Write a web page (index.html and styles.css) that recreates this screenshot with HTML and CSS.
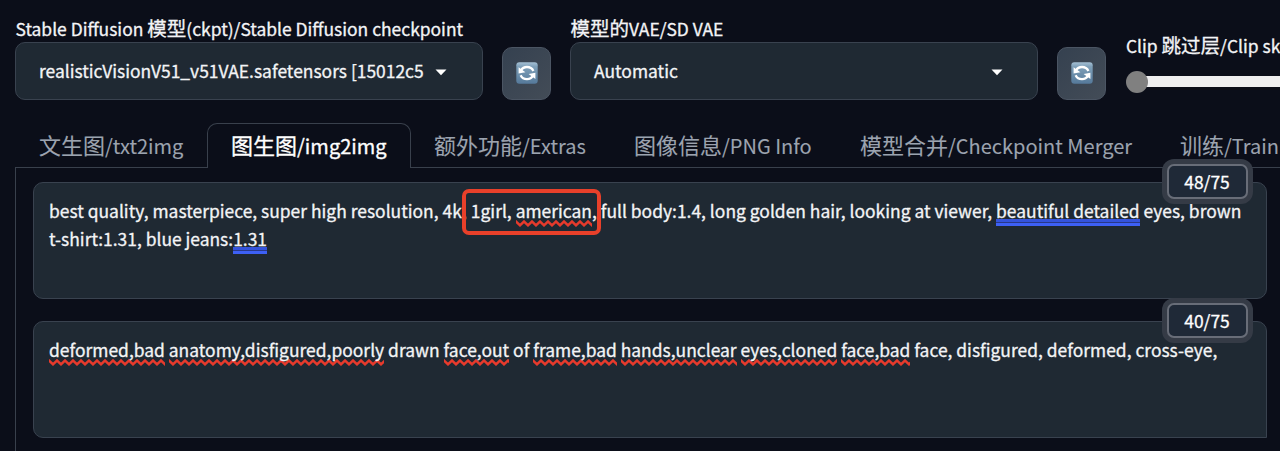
FILE: index.html
```html
<!DOCTYPE html>
<html lang="zh-CN">
<head>
<meta charset="utf-8">
<title>Stable Diffusion</title>
<link rel="stylesheet" href="styles.css">
</head>
<body>
<svg class="defs" width="0" height="0" aria-hidden="true">
  <defs>
    <linearGradient id="tile" x1="0" y1="0" x2="0" y2="1">
      <stop offset="0" stop-color="#a5c0d4"/><stop offset=".2" stop-color="#7fa0b9"/><stop offset="1" stop-color="#55799a"/>
    </linearGradient>
    <symbol id="refresh" viewBox="0 0 22 22">
      <rect x=".3" y=".3" width="21.4" height="21.4" rx="3" fill="url(#tile)"/>
      <path d="M5 8.500C6.200 6.200 8.300 5 11 5c2.900 0 5.200 1.400 6.400 3.900M17 13.500C15.800 15.900 13.700 17.200 11 17.200c-2.900 0-5.200-1.400-6.400-3.900" fill="none" stroke="#fff" stroke-width="2.300"/>
      <path d="M2.600 5.200v6.200l6.800-1.200zM19.400 17v-6.200l-6.800 1.200z" fill="#fff"/>
    </symbol>
  </defs>
</svg>
<div class="app">
  <header class="quick">
    <div class="field">
      <div class="label ckpt-label">Stable Diffusion <span class="cjk">模型</span>(ckpt)/Stable Diffusion checkpoint</div>
      <div class="select"><span class="value ckpt-value">realisticVisionV51_v51VAE.safetensors [15012c5</span><svg class="caret" viewBox="0 0 12 7"><path d="M.5.5h11L6 6.300z"/></svg></div>
    </div>
    <button class="tool"><svg><use href="#refresh"/></svg></button>
    <div class="field">
      <div class="label vae-label"><span class="cjk">模型的</span>VAE/SD VAE</div>
      <div class="select"><span class="value">Automatic</span><svg class="caret caret-far" viewBox="0 0 12 7"><path d="M.5.5h11L6 6.300z"/></svg></div>
    </div>
    <button class="tool"><svg><use href="#refresh"/></svg></button>
    <div class="slider">
      <div class="label">Clip <span class="cjk">跳过层</span>/Clip sk</div>
      <div class="track"><div class="thumb"></div></div>
    </div>
  </header>
  <nav class="tabs">
    <div class="tab t1"><span class="cjk">文生图</span>/txt2img</div>
    <div class="tab t2 active"><span class="cjk">图生图</span>/img2img</div>
    <div class="tab t3"><span class="cjk">额外功能</span>/Extras</div>
    <div class="tab t4"><span class="cjk">图像信息</span>/PNG Info</div>
    <div class="tab t5"><span class="cjk">模型合并</span>/Checkpoint Merger</div>
    <div class="tab t6"><span class="cjk">训练</span>/Train</div>
  </nav>
  <main class="panel">
    <section class="prompt">
      <p class="line l1">best quality, masterpiece, super high resolution, 4k, 1girl, <span class="spell">american</span>, full body:1.4, long golden hair, looking at viewer, <span class="grammar">beautiful detailed</span> eyes, brown</p>
      <p class="line l2">t-shirt:1.31, blue jeans:<span class="grammar">1.31</span></p>
      <div class="mark"></div>
      <div class="counter">48/75</div>
    </section>
    <section class="prompt negative">
      <p class="line l3"><span class="spell">deformed,bad</span> <span class="spell">anatomy,disfigured,poorly</span> drawn <span class="spell">face,out</span> of <span class="spell">frame,bad</span> <span class="spell">hands,unclear</span> <span class="spell">eyes,cloned</span> <span class="spell">face,bad</span> face, disfigured, deformed, cross-eye,</p>
      <div class="counter">40/75</div>
    </section>
  </main>
</div>
</body>
</html>
```
FILE: styles.css
```css
* { box-sizing: border-box; }
body {
  margin: 0;
  background: #0b0e19;
  color: #f3f4f6;
  font-family: "Noto Sans CJK SC", "Noto Sans", sans-serif;
  font-size: 17.430px;
  -webkit-text-stroke: .3px;
}
.defs { position: absolute; }
.app { width: 1280px; height: 451px; overflow: hidden; }
.cjk { font-size: 1.12em; }

.quick { display: flex; align-items: flex-end; height: 100px; padding-left: 15px; }
.field { flex: none; width: 468px; }
.label { height: 26px; line-height: 26px; white-space: nowrap; }
.field .label { height: 27px; padding-left: .5px; }
.select {
  display: flex; align-items: center;
  height: 58px; padding: 0 0 1px 23px;
  border: 1px solid #39424f; border-radius: 10px;
  background: #1f2933;
  white-space: nowrap;
}
.value { flex: none; width: 385px; }
.caret { flex: none; width: 12px; height: 7px; margin: 4px 0 0 11px; fill: #fff; }
.caret-far { margin-left: 12px; }
.tool {
  flex: none; display: flex; align-items: center; justify-content: center;
  width: 49px; height: 53px; margin: 0 19px; padding: 0 0 1px;
  border: 1px solid #4b5563; border-radius: 10px;
  background: linear-gradient(135deg, #354150, #434c57);
}
.tool svg { width: 22px; height: 22px; }
.slider { flex: none; width: 300px; height: 68px; padding-left: 1px; }
.track { height: 11px; margin: 18px 0 0 11px; background: #efeff0; }
.thumb { position: relative; left: -11px; top: -5.500px; width: 22px; height: 22px; border-radius: 50%; background: #808080; }

.tabs {
  display: flex; height: 45px; margin: 23px 0 0 15px;
  font-size: 20px; color: #9ca3af; white-space: nowrap;
  -webkit-text-stroke: .1px;
}
.tabs .cjk { font-size: 22px; }
.tab {
  flex: none; height: 45px; padding-left: 24px; line-height: 42px;
  border-bottom: 1px solid #39404c;
}
.t1 { width: 192px; }
.tab.t2 { width: 204px; padding-left: 23px; line-height: 40px; -webkit-text-stroke: .3px; }
.t3 { width: 200px; padding-left: 23px; }
.t4 { width: 226px; padding-left: 23px; }
.t5 { width: 320px; padding-left: 23px; }
.t6 { width: 300px; padding-left: 23px; }
.active { color: #fff; border: 1px solid #39404c; border-bottom: 0; border-radius: 10px 10px 0 0; }

.panel { display: flex; flex-direction: column; gap: 22px; height: 290px; margin-left: 15px; padding: 14px 0 0 17px; border-left: 1px solid #39404c; }
.prompt {
  position: relative; flex: none;
  width: 1234px; height: 117px; padding: 14px 0 0 15px;
  border: 1px solid #39424f; border-radius: 10px;
  background: #1f2933;
}
.negative { border-bottom-right-radius: 0; }
.line { margin: 0; height: 28px; line-height: 28px; white-space: nowrap; }
.l1, .l3 { letter-spacing: .008px; }
.spell {
  padding-bottom: 4px;
  background: url("data:image/svg+xml,%3Csvg xmlns='http://www.w3.org/2000/svg' width='8' height='7'%3E%3Cpath d='M-2 3.500L0 1.500L4 5.300L8 1.500L10 3.500' fill='none' stroke='%23e83a2c' stroke-width='2.500'/%3E%3C/svg%3E") left bottom repeat-x;
}
.grammar {
  padding-bottom: 3px;
  background: linear-gradient(#3453dc 3px, #28388a 3px 4px, #3d60f5 4px) left bottom / 100% 7px no-repeat;
}
.mark {
  position: absolute; left: 428px; top: 6px; width: 139px; height: 46px;
  border: 4px solid #e8402a; border-radius: 7px;
}
.counter {
  position: absolute; right: 18px; top: -19px;
  width: 81px; height: 35px; padding-right: 1px; line-height: 31px; text-align: center;
  border: 2px solid #686d78; border-radius: 7px;
  background: #1f2937; box-shadow: 0 0 0 5px #353b46;
  color: #fff;
}
```
